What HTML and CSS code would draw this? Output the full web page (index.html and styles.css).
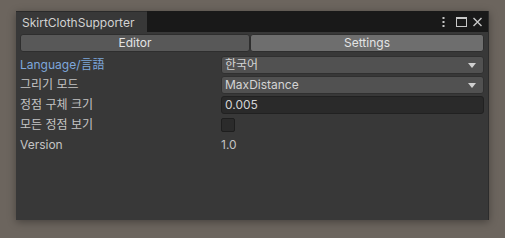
FILE: index.html
```html
<!DOCTYPE html>
<html lang="ko">
<head>
<meta charset="utf-8">
<link rel="stylesheet" href="styles.css">
</head>
<body>
<div class="window">
  <div class="tabbar">
    <div class="tab">SkirtClothSupporter</div>
    <div class="tabicons">
      <svg class="ico dots" width="3" height="12" viewBox="0 0 3 12"><rect x="0.5" y="1" width="2" height="2" fill="#c8c8c8"/><rect x="0.5" y="5" width="2" height="2" fill="#c8c8c8"/><rect x="0.5" y="9" width="2" height="2" fill="#c8c8c8"/></svg>
      <svg class="ico max" width="11" height="12" viewBox="0 0 11 12"><rect x="0.5" y="1.5" width="10" height="9" fill="none" stroke="#c8c8c8" stroke-width="1"/><rect x="0" y="1" width="11" height="2" fill="#c8c8c8"/></svg>
      <svg class="ico close" width="9" height="12" viewBox="0 0 9 12"><path d="M0.5 2 L8.5 10 M8.5 2 L0.5 10" stroke="#c8c8c8" stroke-width="1.4" fill="none"/></svg>
    </div>
  </div>
  <div class="content">
    <div class="toolbar">
      <div class="tbtn first">Editor</div>
      <div class="tbtn active">Settings</div>
    </div>
    <div class="rows">
      <div class="row">
        <div class="label blue">Language/言語</div>
        <div class="value"><div class="dropdown"><span>한국어</span><span class="arrow"></span></div></div>
      </div>
      <div class="row">
        <div class="label">그리기 모드</div>
        <div class="value"><div class="dropdown"><span>MaxDistance</span><span class="arrow"></span></div></div>
      </div>
      <div class="row">
        <div class="label">정점 구체 크기</div>
        <div class="value"><div class="textfield">0.005</div></div>
      </div>
      <div class="row">
        <div class="label">모든 정점 보기</div>
        <div class="value"><div class="checkbox"></div></div>
      </div>
      <div class="row">
        <div class="label">Version</div>
        <div class="value"><div class="plain">1.0</div></div>
      </div>
    </div>
  </div>
</div>
</body>
</html>
```
FILE: styles.css
```css
html, body {
  margin: 0;
  padding: 0;
}
body {
  width: 505px;
  height: 238px;
  overflow: hidden;
  background: #6c655e;
  font-family: Inter, "Noto Sans CJK KR", sans-serif;
  font-size: 12px;
  color: #c4c4c4;
  padding-top: 11px;
  padding-left: 16px;
  box-sizing: border-box;
}
.window {
  width: 472px;
  height: 209px;
  background: #383838;
  box-shadow: 0 2px 8px rgba(0,0,0,0.35);
  border-right: 1px solid #2c2c2c;
  display: flex;
  flex-direction: column;
}
.tabbar {
  height: 21px;
  background: #191919;
  display: flex;
  align-items: stretch;
  justify-content: space-between;
}
.tab {
  width: 125px;
  background: #383838;
  color: #d2d2d2;
  padding-left: 6px;
  line-height: 22px;
  font-size: 12px;
  border-top: 1px solid #2a2a2a;
}
.tabicons {
  display: flex;
  align-items: center;
  padding-right: 6px;
}
.ico {
  display: block;
}
.ico.max {
  margin-left: 11px;
}
.ico.close {
  margin-left: 6px;
}
.content {
  padding: 2px 4px 0 4px;
  display: flex;
  flex-direction: column;
}
.toolbar {
  display: flex;
  height: 18px;
}
.tbtn {
  background: #585858;
  border: 1px solid #2e2e2e;
  border-radius: 3px;
  color: #e4e4e4;
  text-align: center;
  line-height: 16px;
  font-size: 12px;
}
.tbtn.first {
  width: 228px;
}
.tbtn.active {
  flex: 1;
  background: #6e6e6e;
}
.rows {
  margin-top: 3px;
  display: flex;
  flex-direction: column;
}
.row {
  height: 20px;
  display: flex;
  align-items: center;
}
.label {
  width: 201px;
  line-height: 18px;
}
.label.blue {
  color: #7ea7dc;
}
.value {
  flex: 1;
  display: flex;
  align-items: center;
}
.dropdown {
  flex: 1;
  height: 16px;
  background: #515151;
  border: 1px solid #303030;
  border-radius: 3px;
  display: flex;
  align-items: center;
  justify-content: space-between;
  padding: 0 7px 0 3px;
  color: #d4d4d4;
  line-height: 16px;
}
.arrow {
  width: 0;
  height: 0;
  border-left: 4px solid transparent;
  border-right: 4px solid transparent;
  border-top: 5px solid #d0d0d0;
}
.textfield {
  flex: 1;
  height: 16px;
  background: #2a2a2a;
  border: 1px solid #212121;
  border-radius: 3px;
  padding: 0 3px;
  color: #d4d4d4;
  line-height: 16px;
}
.checkbox {
  width: 12px;
  height: 12px;
  background: #2b2b2b;
  border: 1px solid #1e1e1e;
  border-radius: 2px;
}
.plain {
  color: #c4c4c4;
  line-height: 18px;
}
```
